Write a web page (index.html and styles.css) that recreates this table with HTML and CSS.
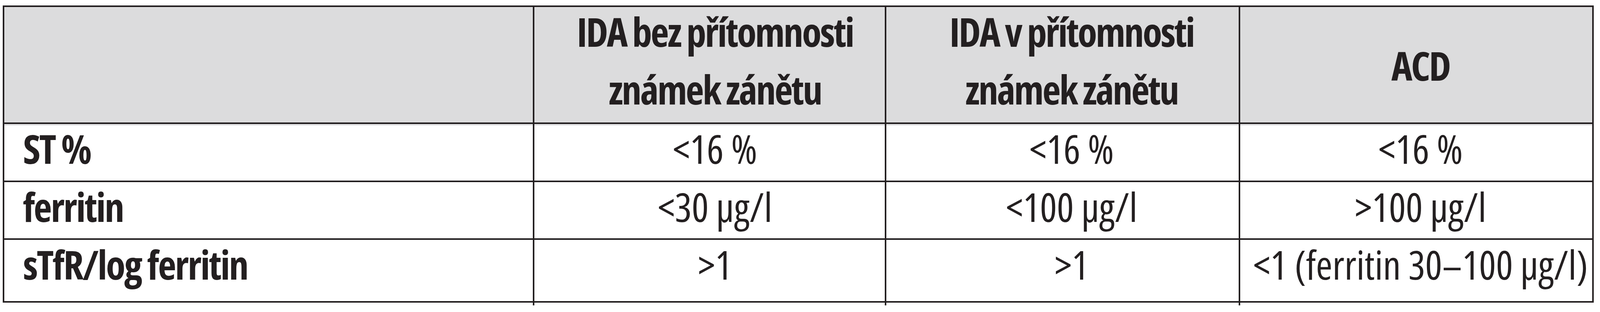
FILE: index.html
```html
<!DOCTYPE html>
<html lang="cs">
<head>
<meta charset="utf-8">
<title>Diagnostika anémie</title>
<link rel="stylesheet" href="styles.css">
</head>
<body>
<div class="wrap">
  <div class="table" role="table">
    <div class="cell head" role="columnheader"></div>
    <div class="cell head two c2" role="columnheader"><span class="txt">IDA bez přítomnosti<br>známek zánětu</span></div>
    <div class="cell head two c3" role="columnheader"><span class="txt">IDA v přítomnosti<br>známek zánětu</span></div>
    <div class="cell head one c4" role="columnheader"><span class="txt">ACD</span></div>

    <div class="cell label first" role="rowheader">ST %</div>
    <div class="cell val first c2" role="cell">&lt;16 %</div>
    <div class="cell val first c3" role="cell">&lt;16 %</div>
    <div class="cell val first c4" role="cell">&lt;16 %</div>

    <div class="cell label" role="rowheader">ferritin</div>
    <div class="cell val c2" role="cell">&lt;30 µg/l</div>
    <div class="cell val c3" role="cell">&lt;100 µg/l</div>
    <div class="cell val c4" role="cell">&gt;100 µg/l</div>

    <div class="cell label" role="rowheader">sTfR/log ferritin</div>
    <div class="cell val c2" role="cell">&gt;1</div>
    <div class="cell val c3" role="cell">&gt;1</div>
    <div class="cell val c4" role="cell">&lt;1 (ferritin 30–100 µg/l)</div>
  </div>
  <div class="ticks" aria-hidden="true">
    <span></span><span></span><span></span><span></span>
  </div>
</div>
</body>
</html>
```

FILE: styles.css
```css
:root {
  /* one reference pixel horizontally: the layout is 5447 units wide */
  --u: calc(100vw / 5447);
  --ink: #231f20;
}

html, body {
  margin: 0;
  padding: 0;
  background: #ffffff;
  overflow: hidden;
}

.wrap {
  padding-top: 14px;
  padding-left: calc(var(--u) * 9);
}

.table,
.ticks {
  display: grid;
  grid-template-columns:
    calc(var(--u) * 1800)
    calc(var(--u) * 1193)
    calc(var(--u) * 1199)
    calc(var(--u) * 1198);
  column-gap: 4px;
  width: max-content;
  background: var(--ink);
}

.table {
  grid-template-rows: 296px 145px 144px 157px;
  row-gap: 4px;
  border: 4px solid var(--ink);
  font-family: "Liberation Sans", Arial, sans-serif;
  color: var(--ink);
}

/* the inner rules run a few pixels past the bottom edge, as in the print */
.ticks {
  height: 7px;
  border-left: 4px solid #ffffff;
  border-right: 4px solid #ffffff;
}

.ticks span {
  background: #ffffff;
}

.cell {
  background: #ffffff;
  white-space: nowrap;
  min-width: 0;
}

.head {
  background: #dcdcdd;
  font-weight: bold;
  font-size: 100px;
  line-height: 148px;
  letter-spacing: -1.5px;
  text-align: center;
  display: flex;
  align-items: center;
  justify-content: center;
}

.head .txt {
  display: block;
}

.head.two {
  padding-bottom: 14px;
}

.head.one {
  padding-top: 13px;
}

.label {
  font-weight: bold;
  font-size: 100px;
  line-height: 134px;
  padding-left: calc(var(--u) * 64);
}

.val {
  font-size: 101px;
  line-height: 134px;
  letter-spacing: 3px;
  text-align: center;
}

.c2 { padding-left: calc(var(--u) * 36); }
.c3 { padding-left: calc(var(--u) * 62); }
.c4 { padding-left: calc(var(--u) * 30); }

.first {
  box-shadow: inset 0 4px 0 #e2e2e4;
}

/* Narrower window than the 5447px design: keep the row heights,
   and use a condensed face so every text keeps its share of the width. */
@media (max-width: 5200px) {
  .table {
    font-family: "Open Sans", "Liberation Sans", sans-serif;
    font-stretch: 75%;
  }
  .head {
    font-size: 102px;
    letter-spacing: -3.5px;
  }
  .head.two {
    padding-bottom: 23px;
  }
  .head.one {
    padding-top: 3px;
  }
  .label {
    font-size: 102px;
    line-height: 125px;
    letter-spacing: -3px;
  }
  .val {
    font-size: 102px;
    line-height: 125px;
    letter-spacing: 0;
  }
}
```
